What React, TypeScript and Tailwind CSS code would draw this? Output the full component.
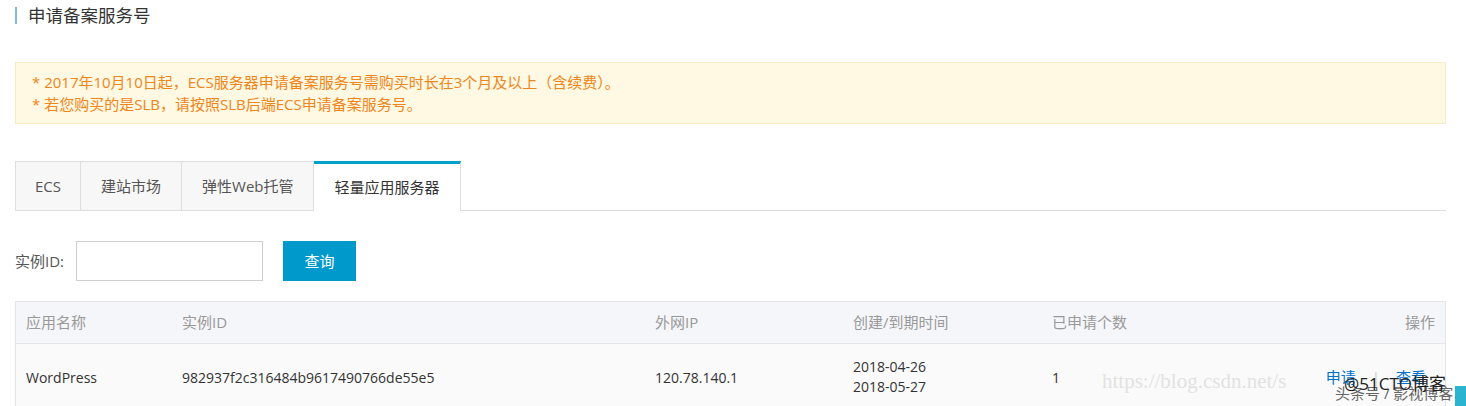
import React from "react";

const tabs = ["ECS", "建站市场", "弹性Web托管", "轻量应用服务器"];

export default function App() {
  return (
    <div
      className="relative h-[406px] w-[1466px] overflow-hidden bg-white text-[#333]"
      style={{ fontFamily: '"Open Sans", "Noto Sans CJK SC", sans-serif' }}
    >
      <div className="ml-[15px] mr-[20px]">
        {/* title */}
        <div className="flex h-[30px] items-center pt-[1px]">
          <span className="h-[17px] w-[2px] bg-[#88b7e0]" />
          <span className="ml-[11px] text-[17.5px] leading-none text-[#333]">申请备案服务号</span>
        </div>

        {/* notice */}
        <div className="mt-[32px] flex h-[62px] flex-col justify-center border border-[#f6ebc6] bg-[#fff8e3] pl-[16px] text-[15px] leading-[22px] text-[#f08519]">
          <p>* 2017年10月10日起，ECS服务器申请备案服务号需购买时长在3个月及以上（含续费）。</p>
          <p>* 若您购买的是SLB，请按照SLB后端ECS申请备案服务号。</p>
        </div>

        {/* tabs */}
        <div className="mt-[37px] flex h-[50px] border-b border-[#dedede]">
          {tabs.map((t, i) => {
            const active = i === tabs.length - 1;
            return (
              <div
                key={t}
                className={
                  active
                    ? "mb-[-1px] flex items-center border-r border-t-[3px] border-r-[#dedede] border-t-[#00a2ca] bg-white px-[20px] text-[15px] text-[#333]"
                    : i === 0
                      ? "flex items-center border-l border-r border-t border-[#dedede] bg-[#f7f7f7] px-[19px] text-[15px] text-[#555]"
                      : "flex items-center border-r border-t border-[#dedede] bg-[#f7f7f7] px-[20px] text-[15px] text-[#555]"
                }
              >
                {t}
              </div>
            );
          })}
        </div>

        {/* search */}
        <div className="mt-[30px] flex items-center">
          <span className="text-[15px] text-[#555]">实例ID:</span>
          <input className="ml-[12px] h-[40px] w-[187px] border border-[#cfcfcf] bg-white outline-none" />
          <button className="ml-[20px] h-[40px] w-[73px] bg-[#0099cc] text-[15px] text-white">查询</button>
        </div>

        {/* table */}
        <div className="mt-[20px] border border-[#e6e6e6]">
          <div className="flex h-[42px] items-center border-b border-[#e6e6e6] bg-[#f5f6fa] text-[15px] text-[#999]">
            <div className="w-[166px] pl-[10px]">应用名称</div>
            <div className="w-[473px]">实例ID</div>
            <div className="w-[198px]">外网IP</div>
            <div className="w-[199px]">创建/到期时间</div>
            <div className="flex-1">已申请个数</div>
            <div className="pr-[10px]">操作</div>
          </div>
          <div className="flex h-[66px] items-center bg-[#fafafa] text-[14px] text-[#333]">
            <div className="w-[166px] pl-[10px]">WordPress</div>
            <div className="w-[473px]">982937f2c316484b9617490766de55e5</div>
            <div className="w-[198px]">120.78.140.1</div>
            <div className="w-[199px] leading-[20px]">
              <div>2018-04-26</div>
              <div>2018-05-27</div>
            </div>
            <div className="flex-1">1</div>
            <div className="flex items-center pr-[19px] text-[15px] text-[#0070cc]">
              <span>申请</span>
              <span className="mx-[16px] text-[#ccc]">|</span>
              <span>查看</span>
            </div>
          </div>
        </div>
      </div>

      {/* watermarks */}
      <div
        className="absolute left-[1102px] top-[366px] text-[21px] text-[#e2e2e2]"
        style={{ fontFamily: '"Liberation Serif", serif' }}
      >
        https://blog.csdn.net/s
      </div>
      <div className="absolute left-[1335px] top-[386px] text-[15px] leading-none text-[#666]">头条号 / 影视博客</div>
      <div className="absolute left-[1344px] top-[375px] text-[17px] leading-none text-[#222]">@51CTO博客</div>
      <div className="absolute left-[1455px] top-[386px] h-[20px] w-[11px] bg-[#2bb4d0]" />
    </div>
  );
}
